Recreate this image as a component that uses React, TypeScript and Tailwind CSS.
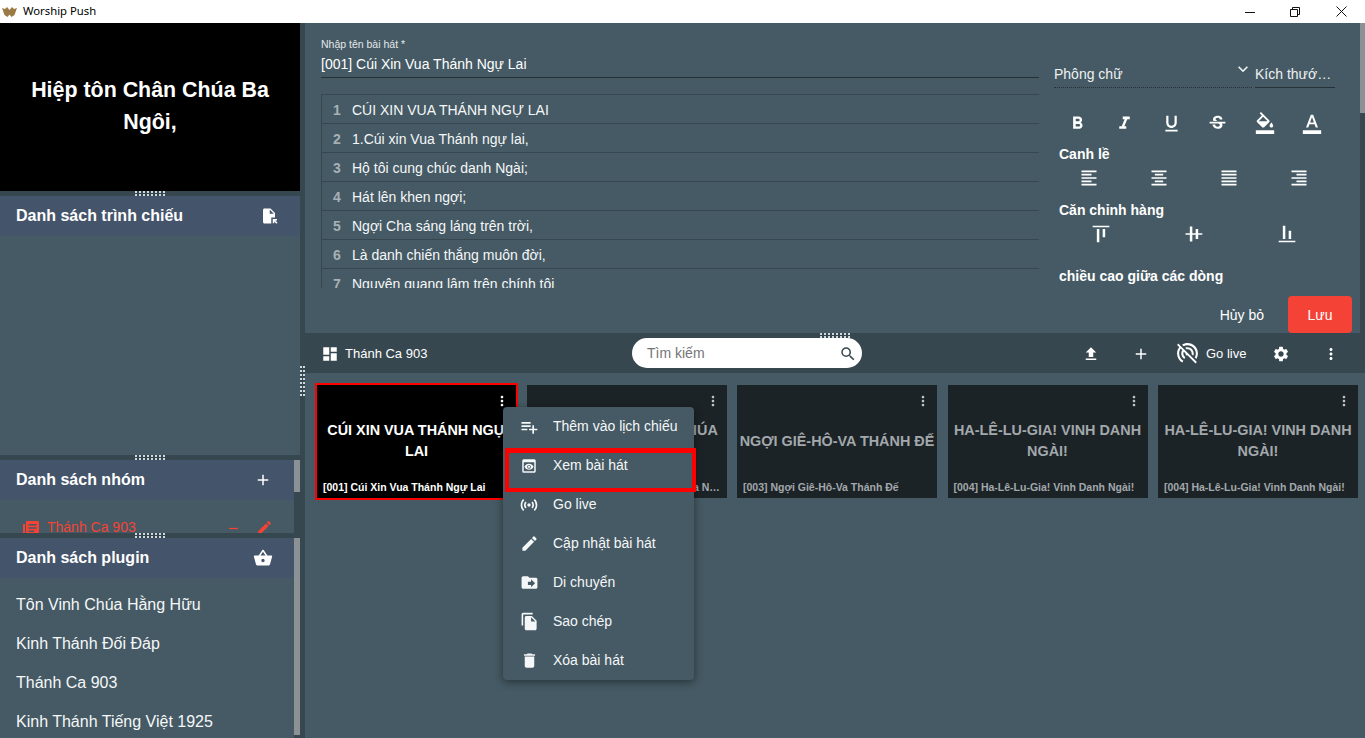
import { type ReactNode } from "react";
import {
  MdAdd,
  MdAlignVerticalBottom,
  MdAlignVerticalCenter,
  MdAlignVerticalTop,
  MdDashboard,
  MdDelete,
  MdDriveFileMove,
  MdEdit,
  MdFileCopy,
  MdFileOpen,
  MdFileUpload,
  MdFormatAlignCenter,
  MdFormatAlignJustify,
  MdFormatAlignLeft,
  MdFormatAlignRight,
  MdFormatBold,
  MdFormatColorFill,
  MdFormatColorText,
  MdFormatItalic,
  MdFormatUnderlined,
  MdKeyboardArrowDown,
  MdMoreVert,
  MdPlaylistAdd,
  MdPortableWifiOff,
  MdPreview,
  MdRemove,
  MdSearch,
  MdSensors,
  MdSettings,
  MdShoppingBasket,
  MdStrikethroughS,
} from "react-icons/md";

const lyrics = [
  "CÚI XIN VUA THÁNH NGỰ LAI",
  "1.Cúi xin Vua Thánh ngự lai,",
  "Hộ tôi cung chúc danh Ngài;",
  "Hát lên khen ngợi;",
  "Ngợi Cha sáng láng trên trời,",
  "Là danh chiến thắng muôn đời,",
  "Nguyên quang lâm trên chính tôi",
];

const plugins = ["Tôn Vinh Chúa Hằng Hữu", "Kinh Thánh Đối Đáp", "Thánh Ca 903", "Kinh Thánh Tiếng Việt 1925"];

const songs = [
  { title: "CÚI XIN VUA THÁNH NGỰ LAI", caption: "[001] Cúi Xin Vua Thánh Ngự Lai", active: true },
  { title: "NGỢI KHEN THÁNH CHÚA VUA NHÂN TỪ", caption: "[002] Ngợi Khen Thánh Chúa Vua Nhân Từ", active: false },
  { title: "NGỢI GIÊ-HÔ-VA THÁNH ĐẾ", caption: "[003] Ngợi Giê-Hô-Va Thánh Đế", active: false },
  { title: "HA-LÊ-LU-GIA! VINH DANH NGÀI!", caption: "[004] Ha-Lê-Lu-Gia! Vinh Danh Ngài!", active: false },
  { title: "HA-LÊ-LU-GIA! VINH DANH NGÀI!", caption: "[004] Ha-Lê-Lu-Gia! Vinh Danh Ngài!", active: false },
];

const menuItems = [
  { label: "Thêm vào lịch chiếu", icon: <MdPlaylistAdd size={20} /> },
  { label: "Xem bài hát", icon: <MdPreview size={18} /> },
  { label: "Go live", icon: <MdSensors size={20} /> },
  { label: "Cập nhật bài hát", icon: <MdEdit size={19} /> },
  { label: "Di chuyển", icon: <MdDriveFileMove size={19} /> },
  { label: "Sao chép", icon: <MdFileCopy size={19} /> },
  { label: "Xóa bài hát", icon: <MdDelete size={19} /> },
];

function Grip({ vertical }: { vertical?: boolean }) {
  const dots = Array.from({ length: 16 });
  return (
    <div className={vertical ? "grid grid-cols-2 gap-x-px gap-y-[2px]" : "grid grid-cols-8 gap-x-[2px] gap-y-px"}>
      {dots.map((_, index) => (
        <div key={index} className="size-[2px] bg-[#cfd8dc]" />
      ))}
    </div>
  );
}

function Splitter() {
  return (
    <div className="flex h-[5px] shrink-0 items-center justify-center bg-[#37474f]">
      <Grip />
    </div>
  );
}

function SectionHeader({ title, icon }: { title: string; icon: ReactNode }) {
  return (
    <div className="flex h-10 shrink-0 items-center justify-between bg-[#44546a] pl-4 pr-[22px] text-white">
      <span className="text-[16px] font-bold">{title}</span>
      {icon}
    </div>
  );
}

// left bar plus a page with three lines, the group list's icon
function GroupIcon() {
  return (
    <svg width="16" height="14" viewBox="0 0 16 14" className="mt-[4px]">
      <path
        d="M0 3 H2 V14 H0 Z M4 0 H15 A1 1 0 0 1 16 1 V13 A1 1 0 0 1 15 14 H4 A1 1 0 0 1 3 13 V1 A1 1 0 0 1 4 0 Z M5.5 3 V4.5 H13.5 V3 Z M5.5 6.2 V7.7 H13.5 V6.2 Z M5.5 9.4 V10.9 H11 V9.4 Z"
        fill="currentColor"
        fillRule="evenodd"
      />
    </svg>
  );
}

function TitleBar() {
  return (
    <div className="flex h-[23px] shrink-0 items-center bg-white text-black">
      <svg width="15" height="10" viewBox="0 0 15 10" className="ml-[2px]">
        <path d="M0 1 L3 2 L5 0 L7.5 3 L10 0 L12 2 L15 1 L12.5 8 L9.5 10 L7.5 7.5 L5.5 10 L2.5 8 Z" fill="#9b7a45" />
      </svg>
      <span className="ml-[6px] font-['Noto_Sans',sans-serif] text-[11.3px]">Worship Push</span>
      <div className="ml-auto flex items-center pr-[18px]">
        <svg width="10" height="10" viewBox="0 0 10 10" className="mr-[35px]">
          <path d="M0 5.5 H10" stroke="#111" fill="none" />
        </svg>
        <svg width="10" height="10" viewBox="0 0 10 10" className="mr-[36px]">
          <path d="M0.5 2.5 H7.5 V9.5 H0.5 Z M2.5 2.5 V0.5 H9.5 V7.5 H7.5" stroke="#111" fill="none" />
        </svg>
        <svg width="11" height="11" viewBox="0 0 11 11">
          <path d="M0.5 0.5 L10.5 10.5 M10.5 0.5 L0.5 10.5" stroke="#111" fill="none" />
        </svg>
      </div>
    </div>
  );
}

function Sidebar() {
  return (
    <div className="flex w-[300px] shrink-0 flex-col overflow-hidden">
      <div className="flex h-[168px] shrink-0 items-center justify-center bg-black px-6 pb-[3px] text-center text-[21.4px] leading-8 font-bold text-white">
        Hiệp tôn Chân Chúa Ba Ngôi,
      </div>
      <Splitter />
      <SectionHeader title="Danh sách trình chiếu" icon={<MdFileOpen size={18} />} />
      <div className="h-[219px] shrink-0" />
      <Splitter />
      <div className="flex h-[73px] shrink-0">
        <div className="min-w-0 flex-1 overflow-hidden">
          <SectionHeader title="Danh sách nhóm" icon={<MdAdd size={18} />} />
          <div className="flex h-[33px] items-start overflow-hidden pt-[17px] pl-[23px] pr-[21px] text-[14px] leading-5 text-[#f44336]">
            <GroupIcon />
            <span className="ml-[8px]">Thánh Ca 903</span>
            <MdRemove size={15} className="mt-[4px] ml-auto" />
            <MdEdit size={17} className="mt-[2px] ml-[15px]" />
          </div>
        </div>
        <div className="w-[6px] shrink-0 bg-[#37474f]">
          <div className="h-8 bg-[#8b9194]" />
        </div>
      </div>
      <Splitter />
      <div className="flex min-h-0 flex-1">
        <div className="min-w-0 flex-1 overflow-hidden">
          <SectionHeader title="Danh sách plugin" icon={<MdShoppingBasket size={20} className="mr-[-1px]" />} />
          <div className="pt-[7px]">
            {plugins.map((name) => (
              <div key={name} className="flex h-[39px] items-center pl-4 text-[16px] text-[#f5f7f8]">
                {name}
              </div>
            ))}
          </div>
        </div>
        <div className="w-[6px] shrink-0 bg-[#37474f]">
          <div className="h-[197px] bg-[#8b9194]" />
        </div>
      </div>
    </div>
  );
}

function LyricsForm() {
  return (
    <div className="w-[718px] shrink-0 pt-[15px]">
      <div className="text-[10.5px] leading-3 text-[#e3e8ea]">Nhập tên bài hát *</div>
      <div className="mt-[5px] h-[23px] border-b border-[#263238] text-[14px] leading-[18px] text-white">
        [001] Cúi Xin Vua Thánh Ngự Lai
      </div>
      <div className="mt-[16px] h-[194px] overflow-hidden border-t border-l border-[#37474f]">
        {lyrics.map((line, index) => (
          <div key={index} className="flex h-[29px] items-center border-b border-[#37474f] pt-[2px] text-[14px] text-[#f5f7f8]">
            <span className="w-[30px] text-center font-bold text-[#a7b0b5]">{index + 1}</span>
            <span>{line}</span>
          </div>
        ))}
      </div>
    </div>
  );
}

function FontPanel() {
  const styleIcons = [
    <MdFormatBold size={21} />,
    <MdFormatItalic size={21} />,
    <MdFormatUnderlined size={21} />,
    <MdStrikethroughS size={21} />,
    <MdFormatColorFill size={22} />,
    <MdFormatColorText size={22} />,
  ];
  const alignIcons = [
    <MdFormatAlignLeft size={20} />,
    <MdFormatAlignCenter size={20} />,
    <MdFormatAlignJustify size={20} />,
    <MdFormatAlignRight size={20} />,
  ];
  const rowIcons = [
    <MdAlignVerticalTop size={20} />,
    <MdAlignVerticalCenter size={20} />,
    <MdAlignVerticalBottom size={20} />,
  ];

  return (
    <div className="ml-[15px] w-[281px] shrink-0 text-white">
      <div className="mt-[39px] flex h-[26px]">
        <div className="relative w-[198px] border-b border-dotted border-[#263238] pt-[2px] text-[14px] leading-5 text-[#eef1f2]">
          Phông chữ
          <MdKeyboardArrowDown size={20} className="absolute top-[-3px] right-[-1px]" />
        </div>
        <div className="ml-[3px] w-[80px] truncate border-b border-[#263238] pt-[2px] pr-[3px] text-[14px] leading-5 text-[#eef1f2]">
          Kích thước chữ
        </div>
      </div>
      <div className="mt-[23px] flex h-[24px]">
        {styleIcons.map((icon, index) => (
          <div key={index} className="flex w-[47px] items-center justify-center">
            {icon}
          </div>
        ))}
      </div>
      <div className="mt-[9px] pl-[5px] text-[14px] leading-5 font-bold">Canh lề</div>
      <div className="mt-[4px] flex h-[20px]">
        {alignIcons.map((icon, index) => (
          <div key={index} className="flex w-[70px] items-center justify-center">
            {icon}
          </div>
        ))}
      </div>
      <div className="mt-[12px] pl-[5px] text-[14px] leading-5 font-bold">Căn chỉnh hàng</div>
      <div className="mt-[4px] flex h-[20px]">
        {rowIcons.map((icon, index) => (
          <div key={index} className="flex w-[93px] items-center justify-center">
            {icon}
          </div>
        ))}
      </div>
      <div className="mt-[22px] pl-[5px] text-[14px] leading-5 font-bold">chiều cao giữa các dòng</div>
    </div>
  );
}

function Editor() {
  return (
    <div className="flex h-[310px] shrink-0">
      <div className="flex min-w-0 flex-1 flex-col">
        <div className="flex h-[273px] shrink-0 overflow-hidden pl-4">
          <LyricsForm />
          <FontPanel />
        </div>
        <div className="flex h-[37px] shrink-0 items-start justify-end pr-2 text-[14px] text-white">
          <span className="mt-[9px] mr-6 leading-5">Hủy bỏ</span>
          <button className="h-[37px] w-16 rounded bg-[#f44336] pt-px text-center text-white">Lưu</button>
        </div>
      </div>
      <div className="w-[5px] shrink-0 bg-[#37474f]">
        <div className="h-[90px] bg-[#8b9194]" />
      </div>
    </div>
  );
}

function Toolbar() {
  return (
    <div className="relative flex h-10 shrink-0 items-center bg-[#37474f] pt-px text-white">
      <div className="absolute top-0 left-0 flex h-[5px] w-full items-center justify-center">
        <Grip />
      </div>
      <MdDashboard size={18} className="ml-[16px]" />
      <span className="ml-[6px] w-[287px] text-[13px]">Thánh Ca 903</span>
      <div className="mt-[-1px] flex h-[30px] w-[230px] items-center justify-between rounded-full bg-white pt-px pr-[5px] pl-[15px] text-[14px] text-[#757575]">
        Tìm kiếm
        <MdSearch size={18} className="text-[#37474f]" />
      </div>
      <MdFileUpload size={18} className="ml-[220px]" />
      <MdAdd size={18} className="ml-[32px]" />
      <MdPortableWifiOff size={25} className="ml-[25px]" />
      <span className="ml-[6px] text-[13px]">Go live</span>
      <MdSettings size={18} className="ml-[26px]" />
      <MdMoreVert size={18} className="ml-[32px]" />
    </div>
  );
}

function SongCard({ title, caption, active }: { title: string; caption: string; active: boolean }) {
  return (
    <div
      className={
        active
          ? "relative ml-px flex h-[113px] flex-col bg-black text-white outline-2 outline-[#ff0000]"
          : "relative flex h-[113px] flex-col bg-[#1c2327] text-[#a2a8ab]"
      }
    >
      <MdMoreVert size={16} className={active ? "absolute top-2 right-[6px] text-white" : "absolute top-2 right-[6px] text-[#c0c5c8]"} />
      <div className="flex h-[90px] shrink-0 items-center justify-center pt-[22px] text-center text-[14.4px] leading-[21px] font-bold">
        {title}
      </div>
      <div className="mt-[2px] truncate px-[6px] text-[10.5px] leading-5 font-bold">{caption}</div>
    </div>
  );
}

function ContextMenu() {
  return (
    <>
      <div className="absolute top-[34px] left-[198px] w-[191px] rounded bg-[#455a64] text-[14px] text-[#f5f7f8] shadow-[0_2px_8px_rgba(0,0,0,0.45)]">
        {menuItems.map((item) => (
          <div key={item.label} className="flex h-[39px] items-center pl-[16px]">
            <div className="flex w-[20px] justify-center">{item.icon}</div>
            <span className="mb-[1px] ml-[14px]">{item.label}</span>
          </div>
        ))}
      </div>
      <div className="absolute top-[75px] left-[200px] h-[44px] w-[191px] border-[4px] border-t-[5px] border-[#ff0000]" />
    </>
  );
}

export default function App() {
  return (
    <div className="flex h-screen w-full flex-col overflow-hidden bg-[#455a64] font-['Liberation_Sans',Arial,sans-serif]">
      <TitleBar />
      <div className="flex min-h-0 flex-1">
        <Sidebar />
        <div className="flex w-[5px] shrink-0 items-center justify-center bg-[#37474f]">
          <Grip vertical />
        </div>
        <div className="flex min-w-0 flex-1 flex-col">
          <Editor />
          <Toolbar />
          <div className="relative min-h-0 flex-1">
            <div className="grid w-[1053px] grid-cols-5 gap-[10.5px] pt-3 pl-[11px]">
              {songs.map((song, index) => (
                <SongCard key={index} {...song} />
              ))}
            </div>
            <ContextMenu />
          </div>
        </div>
      </div>
    </div>
  );
}
